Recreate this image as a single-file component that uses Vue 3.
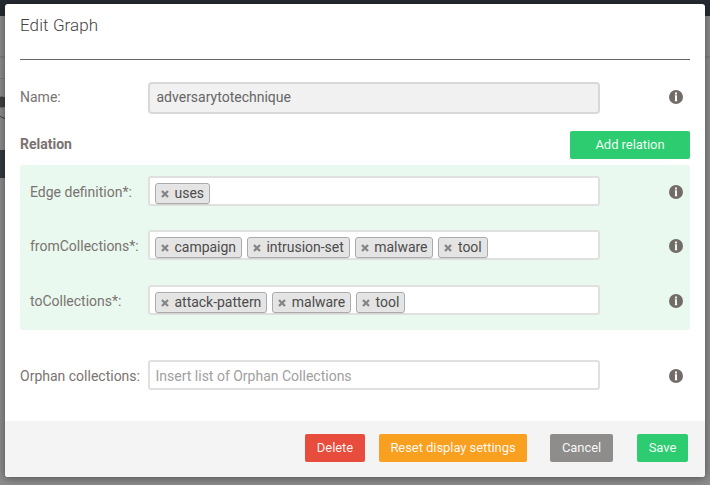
<script setup>
const relations = [
  { label: 'Edge definition*:', tags: ['uses'] },
  { label: 'fromCollections*:', tags: ['campaign', 'intrusion-set', 'malware', 'tool'] },
  { label: 'toCollections*:', tags: ['attack-pattern', 'malware', 'tool'] },
]
</script>

<template>
  <div class="page">
    <svg class="backdrop" width="710" height="485" aria-hidden="true">
      <rect width="710" height="485" fill="#8c8c8c" />
      <rect width="710" height="16" fill="#262b33" />
      <rect y="56" width="710" height="2" fill="#7f7f7f" />
      <rect y="78" width="5" height="1" fill="#7b7b7b" />
      <circle cx="2" cy="102" r="5.5" fill="#41403e" />
      <path d="M-1 116 L6 119" stroke="#454545" fill="none" />
      <rect y="150" width="6" height="28" fill="#343a40" />
    </svg>

    <section class="modal">
      <div class="content">
        <h1 class="title">Edit Graph</h1>

        <div class="row name-row">
          <label class="label">Name:</label>
          <div class="field disabled">adversarytotechnique</div>
          <svg class="info" viewBox="0 0 14 14"><circle cx="7" cy="7" r="7" fill="#736b68" /><path d="M6 2.4h2v2H6zM6 5.3h2v6H6z" fill="#fff" /><path d="M5 5.3h1v1H5zM5 10.3h4v1H5z" fill="#fff" opacity=".2" /></svg>
        </div>

        <div class="relation-head">
          <strong>Relation</strong>
          <button class="btn green add">Add relation</button>
        </div>

        <div class="relations">
          <div v-for="row in relations" :key="row.label" class="row relation-row">
            <label class="label">{{ row.label }}</label>
            <div class="field tags">
              <span v-for="tag in row.tags" :key="tag" class="tag">
                <svg class="cross" viewBox="0 0 8 8"><path d="M1 1 7 7M7 1 1 7" stroke="#858585" stroke-width="2.3" /></svg>{{ tag }}
              </span>
            </div>
            <svg class="info" viewBox="0 0 14 14"><circle cx="7" cy="7" r="7" fill="#736b68" /><path d="M6 2.4h2v2H6zM6 5.3h2v6H6z" fill="#e9f9ef" /><path d="M5 5.3h1v1H5zM5 10.3h4v1H5z" fill="#e9f9ef" opacity=".2" /></svg>
          </div>
        </div>

        <div class="row orphan-row">
          <label class="label">Orphan collections:</label>
          <div class="field placeholder">Insert list of Orphan Collections</div>
          <svg class="info" viewBox="0 0 14 14"><circle cx="7" cy="7" r="7" fill="#736b68" /><path d="M6 2.4h2v2H6zM6 5.3h2v6H6z" fill="#fff" /><path d="M5 5.3h1v1H5zM5 10.3h4v1H5z" fill="#fff" opacity=".2" /></svg>
        </div>
      </div>

      <footer class="footer">
        <button class="btn red delete">Delete</button>
        <button class="btn orange reset">Reset display settings</button>
        <button class="btn gray cancel">Cancel</button>
        <button class="btn green save">Save</button>
      </footer>
    </section>
  </div>
</template>

<style>
body {
  margin: 0;
  overflow: hidden;
}
</style>

<style scoped>
* {
  box-sizing: border-box;
}
.page {
  position: relative;
  width: 710px;
  height: 485px;
  padding: 4px 5px 8px;
  font-family: Roboto, sans-serif;
  font-size: 14px;
  color: #7a7370;
}
.backdrop {
  position: absolute;
  inset: 0;
}
.modal {
  position: relative;
  display: flex;
  flex-direction: column;
  width: 700px;
  height: 473px;
  background: #fff;
  border-radius: 3px;
  box-shadow: 0 1px 8px rgba(0, 0, 0, 0.45);
}
.content {
  height: 417px;
  padding: 0 15px;
}
.title {
  height: 56px;
  margin: 0;
  padding-top: 10px;
  border-bottom: 1px solid #666;
  font-size: 17px;
  font-weight: 300;
  line-height: 23px;
  letter-spacing: 0.1px;
  color: #444;
}
.row {
  display: grid;
  grid-template-columns: 128px 452px 1fr;
  align-items: center;
}
.label {
  line-height: 18px;
  white-space: nowrap;
}
.field {
  height: 30px;
  border: 2px solid #e1e0e0;
  border-radius: 3px;
  background: #fff;
  line-height: 26px;
}
.info {
  display: block;
  width: 14px;
  height: 14px;
  margin-left: 69px;
}
.name-row {
  height: 32px;
  margin-top: 22px;
}
.disabled {
  height: 32px;
  padding-left: 6.5px;
  border-color: #d8d8d8;
  border-radius: 4px;
  background: #f1f1f1;
  color: #666;
  line-height: 27px;
}
.name-row .info {
  margin-bottom: 2px;
}
.name-row .label {
  margin-bottom: 3px;
}
.relation-head {
  display: flex;
  align-items: center;
  justify-content: space-between;
  height: 28px;
  margin-top: 17px;
}
.relation-head strong {
  font-weight: 700;
  line-height: 18px;
  margin-bottom: 3px;
}
.relations {
  display: grid;
  grid-template-rows: 54px 55px 30px;
  align-items: start;
  height: 165px;
  margin-top: 6px;
  padding: 11px 0 15px 10px;
  border-radius: 3px;
  background: #e9f9ef;
}
.relation-row {
  grid-template-columns: 118px 452px 1fr;
  height: 30px;
}
.relation-row .info,
.orphan-row .info {
  margin-top: 2px;
}
.relation-row .label,
.orphan-row .label {
  margin-top: 2px;
}
.tags {
  display: flex;
  gap: 5px;
  padding: 5px 0 0 5px;
}
.tag {
  display: flex;
  align-items: center;
  height: 21px;
  padding: 0 5px;
  border: 1px solid #aaa;
  border-radius: 3px;
  background: #e4e4e4;
  box-shadow: 0 0 1px #fff inset, 0 1px 0 rgba(0, 0, 0, 0.05);
  color: #4c4c4c;
  line-height: 19px;
  letter-spacing: -0.03px;
}
.cross {
  width: 8px;
  height: 8px;
  margin: 1px 5.5px 0 0;
}
.orphan-row {
  height: 30px;
  margin-top: 30px;
}
.placeholder {
  padding: 1px 0 0 5.5px;
  color: #a0a0a0;
}
.footer {
  display: flex;
  align-items: flex-start;
  justify-content: flex-end;
  height: 56px;
  padding: 13px 17px 0 0;
  border-radius: 0 0 3px 3px;
  background: #f4f4f4;
}
.btn {
  height: 28px;
  padding: 0;
  border: 0;
  border-radius: 2px;
  font: 400 13px/28px Roboto, sans-serif;
  letter-spacing: -0.06px;
  color: rgba(255, 255, 255, 0.94);
}
.green {
  background: #2ecc71;
}
.red {
  background: #e74c3c;
}
.orange {
  background: #faa020;
}
.gray {
  background: #8f8d8b;
}
.add {
  width: 120px;
}
.delete {
  width: 60px;
  margin-right: 14px;
}
.reset {
  width: 148px;
  margin-right: 23px;
}
.cancel {
  width: 63px;
  margin-right: 24px;
}
.save {
  width: 51px;
}
</style>
